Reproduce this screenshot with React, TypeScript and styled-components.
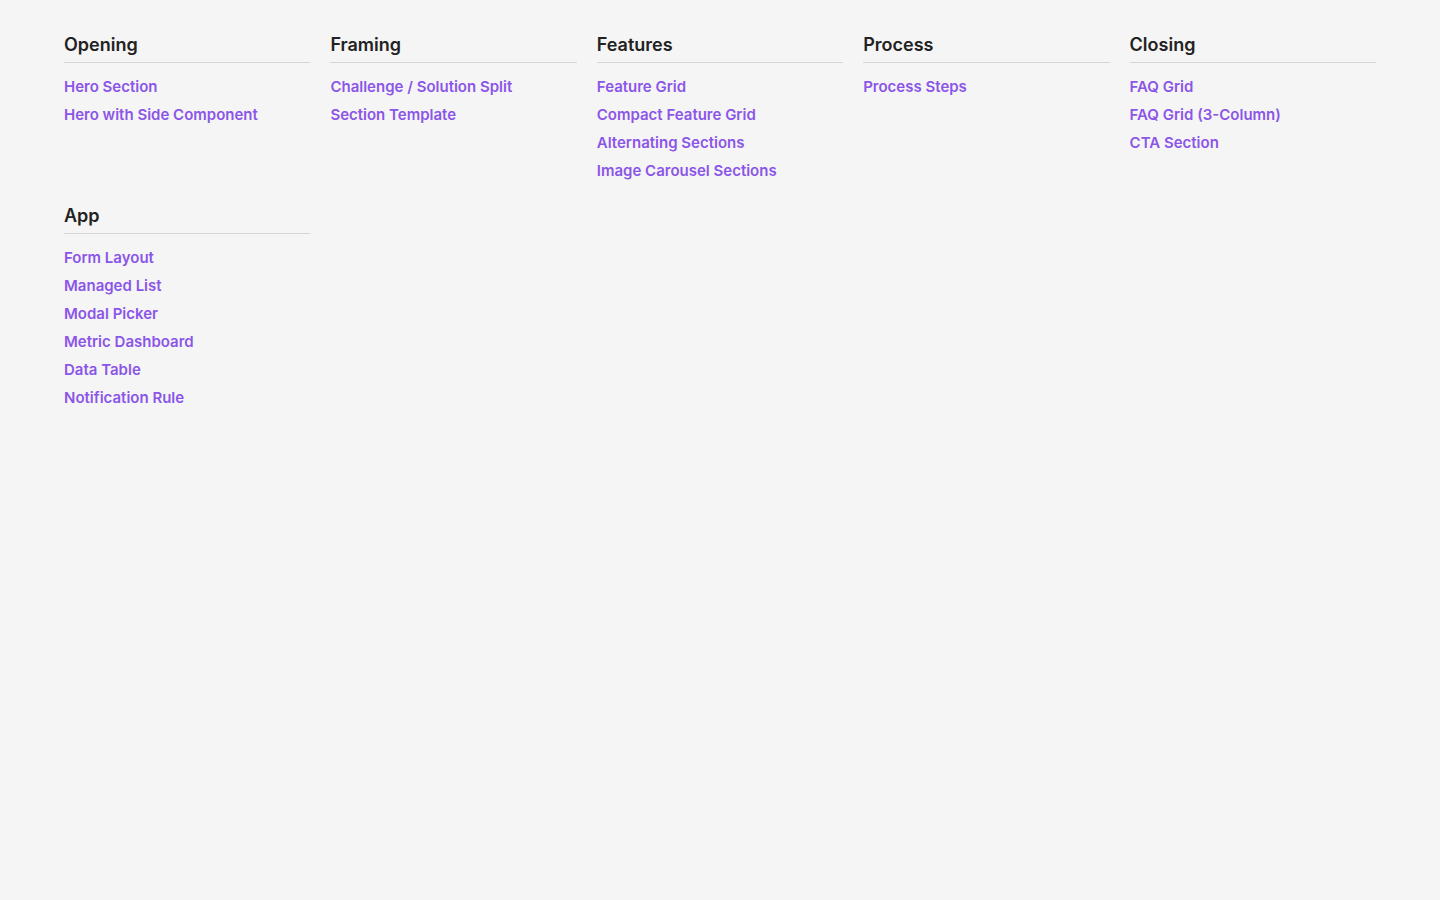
import React from "react";
import styled, { createGlobalStyle } from "styled-components";

const GlobalStyle = createGlobalStyle`
  html, body {
    margin: 0;
    padding: 0;
    background: #f5f5f5;
    font-family: Inter, "Noto Sans", sans-serif;
  }
`;

const Page = styled.div`
  min-height: 100vh;
  box-sizing: border-box;
  padding: 33px 64px 32px;
`;

const Grid = styled.div`
  display: grid;
  grid-template-columns: repeat(5, 1fr);
  column-gap: 20px;
  row-gap: 23px;
  align-items: start;
`;

const Group = styled.section`
  display: flex;
  flex-direction: column;
`;

const Heading = styled.h2`
  margin: 0;
  padding-bottom: 5px;
  border-bottom: 1px solid #d6d6d6;
  font-size: 18px;
  line-height: 24px;
  font-weight: 600;
  color: #222222;
`;

const LinkList = styled.ul`
  list-style: none;
  margin: 14px 0 0;
  padding: 0;
  display: flex;
  flex-direction: column;
  gap: 8px;
`;

const Item = styled.li`
  display: flex;
`;

const Link = styled.a`
  display: block;
  font-size: 15px;
  line-height: 20px;
  font-weight: 600;
  color: #8b55e8;
  text-decoration: none;
  cursor: pointer;
`;

const groups: { title: string; links: string[] }[] = [
  { title: "Opening", links: ["Hero Section", "Hero with Side Component"] },
  { title: "Framing", links: ["Challenge / Solution Split", "Section Template"] },
  {
    title: "Features",
    links: ["Feature Grid", "Compact Feature Grid", "Alternating Sections", "Image Carousel Sections"],
  },
  { title: "Process", links: ["Process Steps"] },
  { title: "Closing", links: ["FAQ Grid", "FAQ Grid (3-Column)", "CTA Section"] },
  {
    title: "App",
    links: ["Form Layout", "Managed List", "Modal Picker", "Metric Dashboard", "Data Table", "Notification Rule"],
  },
];

export default function App() {
  return (
    <>
      <GlobalStyle />
      <Page>
        <Grid>
          {groups.map((g) => (
            <Group key={g.title}>
              <Heading>{g.title}</Heading>
              <LinkList>
                {g.links.map((l) => (
                  <Item key={l}>
                    <Link>{l}</Link>
                  </Item>
                ))}
              </LinkList>
            </Group>
          ))}
        </Grid>
      </Page>
    </>
  );
}
